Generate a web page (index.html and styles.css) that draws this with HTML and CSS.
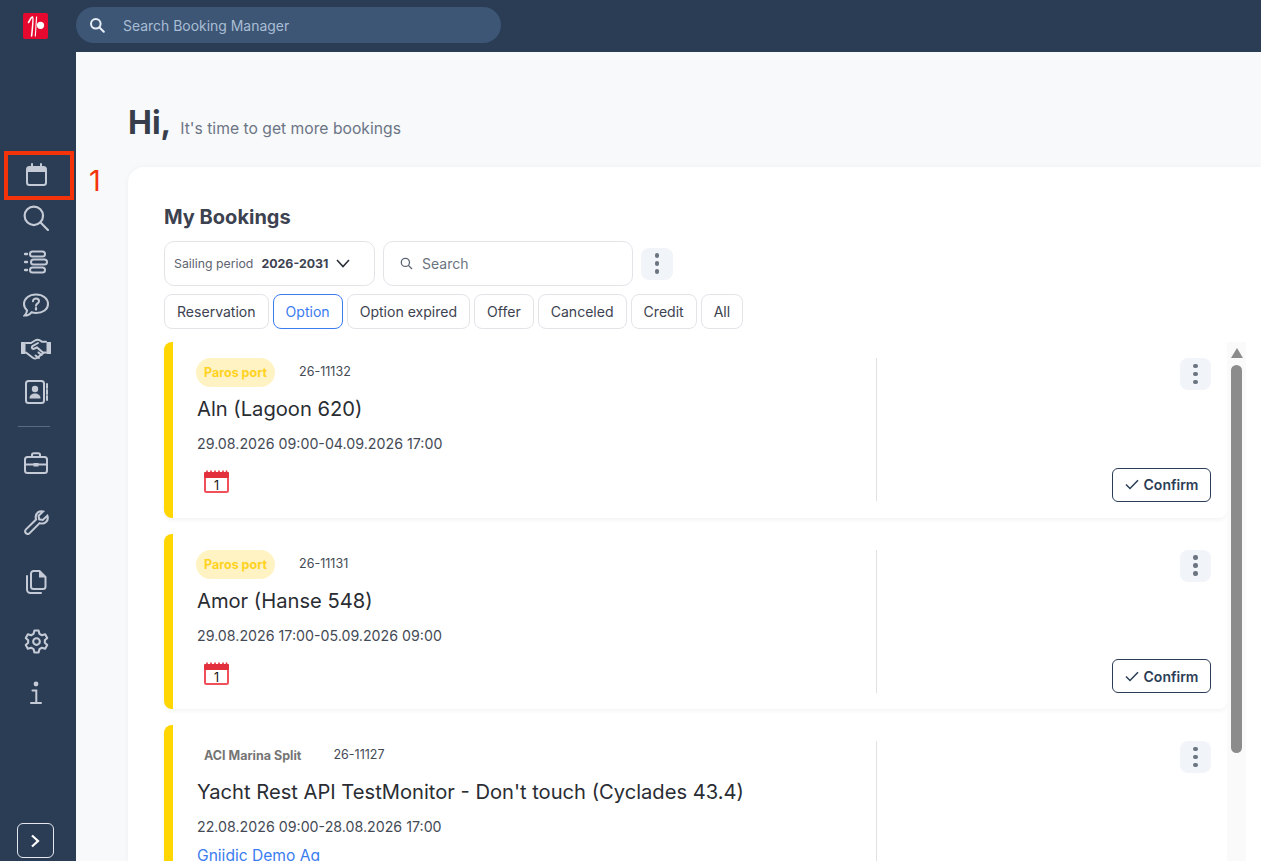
FILE: index.html
```html
<!DOCTYPE html>
<html lang="en">
<head>
  <meta charset="UTF-8">
  <title>My Bookings</title>
  <link rel="stylesheet" href="styles.css">
</head>
<body>
  <div class="topbar">
    <div class="logo-wrap">
      <svg class="logo" viewBox="0 0 25 26" width="25" height="26">
        <rect width="25" height="26" rx="2" fill="#e5092f"/>
        <path d="M5.5 9.5 C7 7.5 8 3.5 9.5 4 C10.5 4.5 9.5 15 8.6 23" fill="none" stroke="#fff" stroke-width="1.6" stroke-linecap="round"/>
        <path d="M13.6 3.5 L12.3 23.5" fill="none" stroke="#fff" stroke-width="1.1"/>
        <circle cx="17.5" cy="12.3" r="3.6" fill="#fff"/>
      </svg>
    </div>
    <div class="global-search">
      <svg class="global-search-icon" viewBox="0 0 16 16" width="16" height="16">
        <circle cx="6.8" cy="6.8" r="4.8" fill="none" stroke="#e8eef5" stroke-width="2"/>
        <path d="M10.5 10.5 L14.8 14.8" stroke="#e8eef5" stroke-width="2" stroke-linecap="round"/>
      </svg>
      <span>Search Booking Manager</span>
    </div>
  </div>

  <div class="layout">
    <div class="sidebar">
      <div class="nav-group">
        <a class="nav-icon nav-icon-first"><svg viewBox="0 0 24 24" width="24" height="24"><rect x="3" y="5" width="19" height="18" rx="2.5"/><path class="fill" d="M3 7.5 A2.5 2.5 0 0 1 5.5 5 H19.5 A2.5 2.5 0 0 1 22 7.5 V10 H3 Z"/><path d="M8 2 V5 M17 2 V5"/></svg></a>
        <a class="nav-icon"><svg viewBox="0 0 24 24" width="26" height="26"><circle cx="10" cy="10" r="8.5"/><path d="M16.2 16.2 L23 23"/></svg></a>
        <a class="nav-icon"><svg viewBox="0 0 24 24" width="24" height="24"><path d="M1 4 H3 M1 12 H3 M1 20 H3" stroke-width="2.4"/><rect x="6" y="1.5" width="15" height="5" rx="2.5"/><rect x="7" y="9.5" width="16" height="5" rx="2.5"/><rect x="6" y="17.5" width="15" height="5" rx="2.5"/></svg></a>
        <a class="nav-icon"><svg viewBox="0 0 26 24" width="26" height="24"><path d="M13 1.5 C20 1.5 25 5.5 25 11 C25 16.5 20 20 13 20 C11.5 20 10 19.8 8.6 19.3 C7 21.3 4.5 22.6 1.5 22.6 C3.2 20.8 4 19.2 4.1 17.4 C2.2 15.6 1 13.5 1 11 C1 5.5 6 1.5 13 1.5 Z"/><path d="M10 8.3 C10 6.6 11.3 5.6 13 5.6 C14.8 5.6 16 6.7 16 8.2 C16 10.4 13 10.4 13 12.8"/><path d="M13 15 V16.6" stroke-width="2.2"/></svg></a>
        <a class="nav-icon"><svg viewBox="0 0 30 22" width="30" height="22"><path class="fill" d="M0 4 H4.5 V16 H0 Z M25.5 4 H30 V16 H25.5 Z"/><path d="M5 5 H10 L14 2.5 C15.5 1.5 17 1.5 18.5 2.2 L21 3.8 H25 M25 14.5 H23 L16 20 C14.5 21 13 20.7 11.5 19.5 L5 14.5"/><path d="M17 5 L11.5 8.2 C10.3 9 10.8 11 12.4 11 L16 9.5 L22.5 15 M14.5 17.5 L18 20 M17.5 14.5 L20.5 17"/></svg></a>
        <a class="nav-icon"><svg viewBox="0 0 24 24" width="24" height="24"><rect x="2" y="1" width="18" height="22" rx="2.5"/><circle class="fill" cx="11" cy="9" r="3.2"/><path class="fill" d="M5.5 18.5 C5.5 15 8 13.5 11 13.5 C14 13.5 16.5 15 16.5 18.5 Z"/><path d="M23 4 V8 M23 10 V14 M23 16 V20"/></svg></a>
      </div>
      <div class="nav-divider"></div>
      <div class="nav-group nav-group-wide">
        <a class="nav-icon"><svg viewBox="0 0 24 22" width="24" height="22"><rect x="1" y="5" width="22" height="16" rx="2.5"/><path d="M8 5 V3 A1.8 1.8 0 0 1 9.8 1.2 H14.2 A1.8 1.8 0 0 1 16 3 V5 M1 12.5 H9.5 M14.5 12.5 H23"/><rect class="fill" x="9.5" y="11" width="5" height="3.5"/></svg></a>
        <a class="nav-icon"><svg viewBox="0 0 24 24" width="25" height="25"><path d="M22.4 5.5 L18 9.6 L14.6 9 L14 5.6 L18.3 1.4 C14.8 0.3 11 3 11.2 7.2 C11.3 8 11.4 8.5 11.6 9 L1.9 18.6 C0.8 19.7 0.8 21.4 1.9 22.3 C3 23.3 4.4 23.2 5.4 22.2 L15 12.6 C19.6 14.2 24.2 10.4 22.4 5.5 Z"/></svg></a>
        <a class="nav-icon"><svg viewBox="0 0 24 24" width="24" height="24"><path d="M7 3.5 A2.5 2.5 0 0 1 9.5 1 H15.5 L21.5 7 V16.5 A2.5 2.5 0 0 1 19 19 H9.5 A2.5 2.5 0 0 1 7 16.5 Z"/><path class="fill" d="M15 1 L21.5 7.5 H15 Z"/><path d="M3 6 V19.5 A3.5 3.5 0 0 0 6.5 23 H17"/></svg></a>
        <a class="nav-icon"><svg viewBox="0 0 24 24" width="25" height="25"><path d="M10 1.5 H14 L14.8 4.6 L17.2 6 L20.3 5.1 L22.3 8.6 L20 10.8 V13.2 L22.3 15.4 L20.3 18.9 L17.2 18 L14.8 19.4 L14 22.5 H10 L9.2 19.4 L6.8 18 L3.7 18.9 L1.7 15.4 L4 13.2 V10.8 L1.7 8.6 L3.7 5.1 L6.8 6 L9.2 4.6 Z" stroke-linejoin="round"/><circle cx="12" cy="12" r="3.2"/></svg></a>
        <a class="nav-icon nav-icon-short"><svg viewBox="0 0 12 24" width="12" height="24"><circle class="fill" cx="6" cy="3" r="2.4"/><path d="M2.5 9.5 H6.3 V21.5 M1 22 H11"/></svg></a>
      </div>
      <button class="expand-btn"><svg viewBox="0 0 12 14" width="12" height="14"><path d="M3 1.5 L9 7 L3 12.5" fill="none" stroke="#fff" stroke-width="2.2"/></svg></button>
    </div>

    <div class="main">
      <div class="greeting">
        <h1>Hi,</h1>
        <span>It's time to get more bookings</span>
      </div>

      <div class="panel">
        <h2>My Bookings</h2>
        <div class="toolbar">
          <div class="period">
            <span class="period-label">Sailing period</span>
            <b>2026-2031</b>
            <svg viewBox="0 0 14 9" width="14" height="9"><path d="M1 1 L7 7.5 L13 1" fill="none" stroke="#2a2f38" stroke-width="1.6"/></svg>
          </div>
          <div class="search-box">
            <svg viewBox="0 0 14 14" width="13" height="13"><circle cx="5.8" cy="5.8" r="4.4" fill="none" stroke="#5d6673" stroke-width="1.4"/><path d="M9 9 L13 13" stroke="#5d6673" stroke-width="1.4"/></svg>
            <span>Search</span>
          </div>
          <button class="kebab"><i></i><i></i><i></i></button>
        </div>
        <div class="tabs">
          <button class="tab">Reservation</button>
          <button class="tab active">Option</button>
          <button class="tab">Option expired</button>
          <button class="tab">Offer</button>
          <button class="tab">Canceled</button>
          <button class="tab">Credit</button>
          <button class="tab">All</button>
        </div>

        <div class="list-wrap">
          <div class="booking-list">
            <div class="booking">
              <div class="booking-info">
                <div class="booking-top"><span class="tag tag-yellow">Paros port</span><span class="booking-no">26-11132</span></div>
                <div class="booking-title">Aln (Lagoon 620)</div>
                <div class="booking-date">29.08.2026 09:00-04.09.2026 17:00</div>
                <svg class="cal-badge" viewBox="0 0 25 23" width="25" height="23">
                  <rect x="1" y="3" width="23" height="19" rx="1.5" fill="#fff" stroke="#f0505c" stroke-width="2"/>
                  <rect x="0" y="2" width="25" height="6" rx="1" fill="#e2303c"/>
                  <path d="M3 0.5 V3 M7 0.5 V3 M11 0.5 V3 M15 0.5 V3 M19 0.5 V3 M22.5 0.5 V3" stroke="#e2303c" stroke-width="1.6"/>
                  <text x="12.5" y="20" text-anchor="middle" class="cal-num">1</text>
                </svg>
              </div>
              <div class="booking-actions">
                <button class="kebab"><i></i><i></i><i></i></button>
                <button class="confirm"><svg viewBox="0 0 14 11" width="14" height="11"><path d="M1 5.5 L5 9.5 L13 1.2" fill="none" stroke="#2b3d55" stroke-width="1.5"/></svg>Confirm</button>
              </div>
            </div>
            <div class="booking">
              <div class="booking-info">
                <div class="booking-top"><span class="tag tag-yellow">Paros port</span><span class="booking-no">26-11131</span></div>
                <div class="booking-title">Amor (Hanse 548)</div>
                <div class="booking-date">29.08.2026 17:00-05.09.2026 09:00</div>
                <svg class="cal-badge" viewBox="0 0 25 23" width="25" height="23">
                  <rect x="1" y="3" width="23" height="19" rx="1.5" fill="#fff" stroke="#f0505c" stroke-width="2"/>
                  <rect x="0" y="2" width="25" height="6" rx="1" fill="#e2303c"/>
                  <path d="M3 0.5 V3 M7 0.5 V3 M11 0.5 V3 M15 0.5 V3 M19 0.5 V3 M22.5 0.5 V3" stroke="#e2303c" stroke-width="1.6"/>
                  <text x="12.5" y="20" text-anchor="middle" class="cal-num">1</text>
                </svg>
              </div>
              <div class="booking-actions">
                <button class="kebab"><i></i><i></i><i></i></button>
                <button class="confirm"><svg viewBox="0 0 14 11" width="14" height="11"><path d="M1 5.5 L5 9.5 L13 1.2" fill="none" stroke="#2b3d55" stroke-width="1.5"/></svg>Confirm</button>
              </div>
            </div>
            <div class="booking">
              <div class="booking-info">
                <div class="booking-top"><span class="tag">ACI Marina Split</span><span class="booking-no">26-11127</span></div>
                <div class="booking-title">Yacht Rest API TestMonitor - Don't touch (Cyclades 43.4)</div>
                <div class="booking-date">22.08.2026 09:00-28.08.2026 17:00</div>
                <a class="booking-agency">Gnjidic Demo Ag</a>
              </div>
              <div class="booking-actions">
                <button class="kebab"><i></i><i></i><i></i></button>
              </div>
            </div>
          </div>
          <div class="scrollbar">
            <div class="scroll-arrow"></div>
            <div class="scroll-thumb"></div>
          </div>
        </div>
      </div>
    </div>
  </div>

  <!-- annotation drawn over the screenshot -->
  <div class="marker-box"></div>
  <div class="marker-num">1</div>
</body>
</html>
```

FILE: styles.css
```css
* { box-sizing: border-box; font-family: "Inter", "Liberation Sans", sans-serif; }
html, body { height: 100%; }
body { margin: 0; background: #2b3d55; overflow: hidden; position: relative; }
button { background: none; border: none; padding: 0; }

.topbar {
  height: 52px;
  display: flex;
  align-items: center;
  background: #2b3d55;
}

.logo-wrap {
  width: 76px;
  padding-left: 23px;
  display: flex;
}

.global-search {
  width: 425px;
  height: 36px;
  margin-top: -2px;
  border-radius: 18px;
  background: #3d5676;
  display: flex;
  align-items: center;
  padding-left: 13px;
  gap: 18px;
  color: #a8bdd3;
  font-size: 13.95px;
}

.layout {
  display: flex;
  height: 809px;
}

.sidebar {
  width: 76px;
  flex-shrink: 0;
  display: flex;
  flex-direction: column;
  align-items: center;
  padding-top: 101px;
  background: #2b3d55;
}

.nav-group { display: flex; flex-direction: column; align-items: center; }

.nav-icon {
  width: 50px;
  height: 43.5px;
  display: flex;
  align-items: center;
  justify-content: center;
  margin-left: -4px;
}

.nav-icon-first svg { margin-top: -2px; }

.nav-icon svg {
  fill: none;
  stroke: #c5cbd6;
  stroke-width: 2;
  stroke-linecap: round;
}

.nav-icon svg .fill { fill: #c5cbd6; stroke: none; }

.nav-divider {
  width: 32px;
  height: 1px;
  margin: 12px 0 0 -8px;
  background: #5b6a7e;
}

.nav-group-wide { margin-top: 6px; }
.nav-group-wide .nav-icon { height: 59.5px; }
.nav-group-wide .nav-icon-short { height: 44.5px; }

.expand-btn {
  width: 37px;
  height: 35px;
  margin: auto 0 3px -6px;
  border: 1px solid #e4e8ee;
  border-radius: 6px;
  display: flex;
  align-items: center;
  justify-content: center;
}

.main {
  flex: 1;
  min-width: 0;
  background: #f8f9fb;
  padding: 0 0 0 52px;
}

.greeting {
  height: 115px;
  display: flex;
  align-items: baseline;
  padding-top: 51px;
  gap: 9px;
}

.greeting h1 {
  margin: 0;
  font-size: 32px;
  line-height: 40px;
  font-weight: 700;
  color: #373d4a;
}

.greeting span {
  font-size: 15.7px;
  color: #6c7585;
}

.panel {
  height: 694px;
  background: #fff;
  border-radius: 16px 0 0 0;
  padding: 38px 0 0 36px;
  box-shadow: 0 0 6px rgba(40,50,70,0.04);
  overflow: hidden;
}

.panel h2 {
  margin: 0 0 12px;
  font-size: 20px;
  line-height: 24px;
  font-weight: 700;
  color: #3d4250;
}

.toolbar {
  display: flex;
  align-items: center;
  gap: 8px;
  height: 45px;
}

.period {
  width: 211px;
  height: 45px;
  border: 1px solid #e2e4e8;
  border-radius: 10px;
  display: flex;
  align-items: center;
  padding: 0 9px;
  font-size: 13px;
  color: #3d4250;
}

.period-label { font-size: 12.3px; color: #5d6470; margin-right: 8px; }
.period b { font-size: 12.4px; margin-right: 8px; }

.search-box {
  width: 250px;
  height: 45px;
  border: 1px solid #e2e4e8;
  border-radius: 10px;
  display: flex;
  align-items: center;
  padding-left: 16px;
  gap: 9px;
  font-size: 14px;
  color: #6c7380;
}

.kebab {
  width: 32px;
  height: 32px;
  background: #f1f4f8;
  border-radius: 8px;
  display: flex;
  flex-direction: column;
  align-items: center;
  justify-content: center;
  gap: 3.5px;
}

.booking-actions .kebab { width: 31px; }

.kebab i {
  width: 4.5px;
  height: 4.5px;
  border-radius: 50%;
  background: #6b7480;
}

.tabs {
  display: flex;
  gap: 4px;
  margin-top: 8px;
}

.tab {
  height: 35px;
  padding: 0 12px;
  border: 1px solid #e2e4e8;
  border-radius: 8px;
  background: #fff;
  font-size: 14.05px;
  color: #3d4250;
}

.tab.active {
  border-color: #3b7cf0;
  color: #3b7cf0;
}

.list-wrap {
  display: flex;
  margin-top: 13px;
  height: 530px;
}

.booking-list {
  width: 1063px;
  flex-shrink: 0;
  display: flex;
  flex-direction: column;
  gap: 16px;
}

.booking {
  flex-shrink: 0;
  height: 175.5px;
  display: flex;
  background: #fff;
  border-left: 9px solid #ffd600;
  border-radius: 8px;
  box-shadow: 0 2px 4px rgba(40,50,70,0.06);
  padding: 16px 16px 16px 24px;
}

.booking-info {
  width: 680px;
  border-right: 1px solid #dfe1e5;
  height: 143px;
}

.booking-top {
  display: flex;
  align-items: center;
  gap: 24px;
  height: 29px;
  margin-left: -1px;
}

.tag {
  height: 29px;
  padding: 0 8px;
  border-radius: 15px;
  display: flex;
  align-items: center;
  font-size: 12.5px;
  font-weight: 700;
  color: #757575;
}

.tag-yellow {
  background: #fff3c4;
  color: #ffd21f;
}

.booking-no {
  font-size: 12.5px;
  color: #444a55;
  margin-top: -2px;
}

.booking-title {
  margin-top: 9px;
  font-size: 20.15px;
  line-height: 26px;
  color: #2a2d33;
}

.booking-date {
  margin-top: 13px;
  font-size: 14.23px;
  line-height: 18px;
  color: #444a55;
}

.booking-agency {
  display: block;
  margin-top: 10px;
  font-size: 15.6px;
  color: #3b7cf0;
}

.cal-badge {
  display: block;
  margin: 17px 0 0 7px;
}

.cal-num {
  font-size: 12.5px;
  fill: #111;
}

.booking-actions {
  flex: 1;
  display: flex;
  flex-direction: column;
  align-items: flex-end;
  justify-content: space-between;
  height: 143.6px;
}

.confirm {
  width: 99px;
  height: 34px;
  border: 1px solid #2b3d55;
  border-radius: 6px;
  display: flex;
  align-items: center;
  justify-content: center;
  gap: 5px;
  font-size: 14px;
  font-weight: 600;
  color: #2b3d55;
}

.scrollbar {
  width: 19px;
  height: 520px;
  background: #fafafa;
  display: flex;
  flex-direction: column;
  align-items: center;
  padding-top: 6px;
}

.scroll-arrow {
  width: 0;
  height: 0;
  border-left: 6px solid transparent;
  border-right: 6px solid transparent;
  border-bottom: 10px solid #8c8c8c;
}

.scroll-thumb {
  width: 11px;
  height: 388px;
  margin-top: 7px;
  border-radius: 6px;
  background: #8c8c8c;
}

.marker-box {
  position: absolute;
  left: 4px;
  top: 151px;
  width: 70px;
  height: 49px;
  border: 4px solid #f5330a;
}

.marker-num {
  position: absolute;
  left: 89px;
  top: 165px;
  font-size: 29px;
  line-height: 32px;
  color: #f5330a;
}
```
